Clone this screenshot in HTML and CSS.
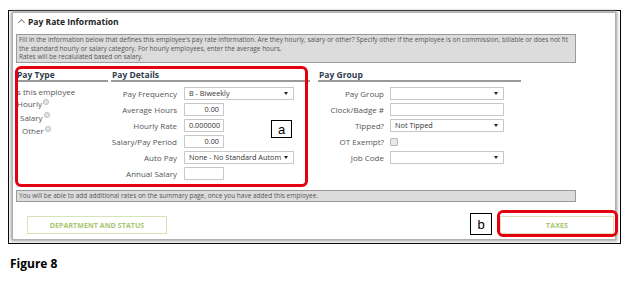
FILE: index.html
```html
<!DOCTYPE html>
<html>
<head>
<meta charset="utf-8">
<link rel="stylesheet" href="styles.css">
</head>
<body>
<div class="frame">
  <div class="panel">
    <div class="header"><span class="chev"></span><span class="title">Pay Rate Information</span></div>
    <div class="info">Fill in the information below that defines this employee's pay rate information. Are they hourly, salary or other? Specify other if the employee is on commission, billable or does not fit<br>the standard hourly or salary category. For hourly employees, enter the average hours.<br>Rates will be recalulated based on salary.</div>
    <div class="sections">
      <div class="col col-type">
        <div class="heading">Pay Type</div>
        <div class="type-list">
          <div class="type-q">s this employee</div>
          <div class="type-opt t1">Hourly<span class="radio"></span></div>
          <div class="type-opt t2">Salary<span class="radio"></span></div>
          <div class="type-opt t3">Other<span class="radio"></span></div>
        </div>
      </div>
      <div class="col col-details">
        <div class="heading">Pay Details</div>
        <div class="form">
          <label>Pay Frequency</label><div class="select wide">B - Biweekly</div>
          <label>Average Hours</label><div class="input num">0.00</div>
          <label>Hourly Rate</label><div class="input num">0.000000</div>
          <label>Salary/Pay Period</label><div class="input num">0.00</div>
          <label>Auto Pay</label><div class="select wide">None - No Standard Autom</div>
          <label>Annual Salary</label><div class="input num"></div>
        </div>
      </div>
      <div class="col col-group">
        <div class="heading">Pay Group</div>
        <div class="form form-group">
          <label>Pay Group</label><div class="select gwide"></div>
          <label>Clock/Badge #</label><div class="input gwide"></div>
          <label>Tipped?</label><div class="select gwide">Not Tipped</div>
          <label>OT Exempt?</label><div class="cbwrap"><span class="checkbox"></span></div>
          <label>Job Code</label><div class="select gwide"></div>
        </div>
      </div>
    </div>
    <div class="notice">You will be able to add additional rates on the summary page, once you have added this employee.</div>
    <div class="buttons">
      <div class="btn btn-dept">DEPARTMENT AND STATUS</div>
      <div class="btn btn-taxes">TAXES</div>
    </div>
  </div>
  <div class="redbox box-a"></div>
  <div class="tag tag-a">a</div>
  <div class="redbox box-b"></div>
  <div class="tag tag-b">b</div>
</div>
<div class="caption">Figure 8</div>
</body>
</html>
```

FILE: styles.css
```css
* { box-sizing: border-box; }
body {
  margin: 0;
  background: #fff;
  font-family: "Open Sans", "Liberation Sans", sans-serif;
  color: #555;
}
.frame {
  position: relative;
  margin: 10px 0 0 8px;
  width: 613px;
  height: 234px;
  border: 1px solid #000;
  padding: 1px 4px 3px 3px;
}
.panel {
  height: 100%;
  border: 1px solid #b0b0b0;
  box-shadow: 0 0 3px 1px #999;
  background: #fff;
  padding: 0 0 0 3px;
}
.header {
  display: flex;
  align-items: center;
  height: 16px;
  padding-left: 1px;
}
.chev {
  width: 5px;
  height: 5px;
  border-left: 1px solid #888;
  border-top: 1px solid #888;
  transform: rotate(45deg);
  margin: 3px 4px 0 2px;
}
.title {
  font-weight: 700;
  font-size: 8.5px;
  color: #222;
}
.info {
  margin-top: 5px;
  width: 560px;
  height: 29px;
  background: #dcdcdc;
  border: 1px solid #9a9a9a;
  font-size: 6.5px;
  line-height: 8.5px;
  padding: 1px 2px;
  color: #555;
  white-space: nowrap;
  overflow: hidden;
}
.sections {
  display: flex;
  margin-top: 7px;
  height: 113px;
}
.col { display: flex; flex-direction: column; }
.col-type { width: 92px; margin-right: 3px; }
.col-details { width: 199px; margin-right: 8px; }
.col-group { width: 203px; }
.heading {
  font-size: 8.5px;
  font-weight: 700;
  color: #2f3d4c;
  line-height: 10px;
  padding-left: 1px;
  border-bottom: 2px solid #9a9a9a;
}
.type-list {
  display: flex;
  flex-direction: column;
  margin-top: 4px;
  font-size: 8px;
  line-height: 13px;
}
.type-q { padding-left: 1px; height: 11px; line-height: 11px; }
.type-opt { display: flex; align-items: center; height: 13.5px; }
.t1 { padding-left: 1px; }
.t2 { padding-left: 4px; }
.t3 { padding-left: 6px; }
.radio {
  width: 6px;
  height: 6px;
  border-radius: 50%;
  border: 1px solid #bbb;
  background: #e6e6e6;
  margin: -4px 0 0 1px;
}
.form {
  display: grid;
  grid-template-columns: 66px 1fr;
  column-gap: 7px;
  row-gap: 3px;
  margin-top: 5px;
  align-items: center;
}
.form-group { column-gap: 6px; }
label {
  font-size: 8px;
  text-align: right;
  color: #555;
  white-space: nowrap;
  line-height: 13px;
}
.select, .input {
  position: relative;
  height: 13px;
  border: 1px solid #c8c8c8;
  font-size: 7.3px;
  line-height: 11px;
  color: #333;
  padding: 0 4px;
  background: #fff;
  white-space: nowrap;
  overflow: hidden;
}
.select::after {
  content: "";
  position: absolute;
  right: 5px;
  top: 4px;
  border-left: 2px solid transparent;
  border-right: 2px solid transparent;
  border-top: 3px solid #222;
}
.wide { width: 110px; }
.num { width: 40px; text-align: right; }
.gwide { width: 114px; }
.select.wide { padding-right: 12px; }
.cbwrap { height: 13px; display: flex; align-items: center; }
.checkbox {
  width: 8px;
  height: 8px;
  border: 1px solid #bbb;
  background: #e8e8e8;
  border-radius: 1px;
}
.notice {
  margin-top: 7px;
  width: 560px;
  height: 12px;
  background: #dcdcdc;
  border: 1px solid #9a9a9a;
  font-size: 6.5px;
  line-height: 10px;
  padding-left: 2px;
  color: #555;
}
.buttons {
  display: flex;
  justify-content: space-between;
  margin-top: 14px;
  padding: 0 1px 0 11px;
}
.btn {
  height: 18px;
  border: 1px solid #d6e3b8;
  color: #a9c46e;
  font-size: 7px;
  font-weight: 700;
  display: flex;
  align-items: center;
  justify-content: center;
  letter-spacing: 0.1px;
}
.btn-dept { width: 140px; }
.btn-taxes { width: 114px; }
.redbox {
  position: absolute;
  border: 3px solid #e3000f;
  border-radius: 6px;
}
.box-a { left: 6px; top: 55px; width: 293px; height: 121px; }
.box-b { left: 488px; top: 199px; width: 121px; height: 27px; }
.tag {
  position: absolute;
  border: 1px solid #000;
  background: #fff;
  color: #000;
  font-family: "Liberation Sans", sans-serif;
  font-size: 13px;
  display: flex;
  align-items: center;
  justify-content: center;
}
.tag-a { left: 262px; top: 109px; width: 21px; height: 18px; }
.tag-b { left: 461px; top: 202px; width: 22px; height: 22px; }
.caption {
  margin: 11px 0 0 10px;
  font-family: "Open Sans", "Liberation Sans", sans-serif;
  font-weight: 700;
  font-size: 12px;
  color: #000;
}
```
